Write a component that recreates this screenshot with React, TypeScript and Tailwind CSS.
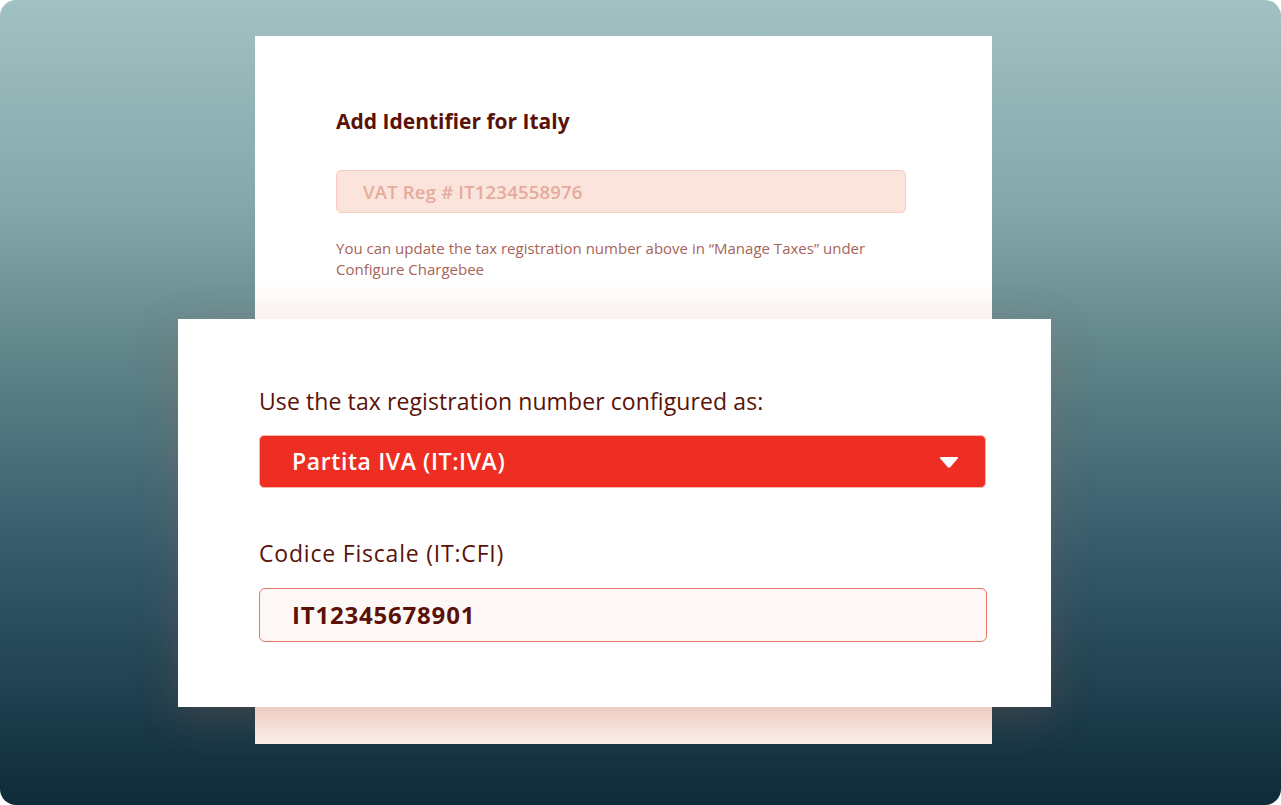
const FONT = "font-['Open_Sans','Noto_Sans',sans-serif]";

function CaretDown() {
  return (
    <svg width="22" height="14" viewBox="0 0 22 14" className="shrink-0">
      <path d="M3 2 H19 Q21 2 19.8 3.6 L12.4 12 Q11 13.4 9.6 12 L2.2 3.6 Q1 2 3 2 Z" fill="#ffffff" />
    </svg>
  );
}

function BackCard() {
  return (
    <div className="w-[737px] h-[708px] bg-[linear-gradient(180deg,#ffffff_0%,#ffffff_34%,#fefaf8_38%,#ffffff_42%,#ffffff_94%,#f7e0d8_94.8%,#fcf1ed_100%)] pl-[81px] pt-[71px]">
      <h2 className="text-[21px] leading-[28px] font-bold text-[#5a1208]">
        Add Identifier for Italy
      </h2>
      <div className="mt-[35px] w-[570px] h-[43px] rounded-[5px] border border-[#f5cdbf] bg-[#fbe4dc] flex items-center pl-[26px]">
        <span className="text-[18.5px] font-semibold text-[#e5ab9b] tracking-[0.2px]">VAT Reg # IT1234558976</span>
      </div>
      <p className="mt-[25px] w-[560px] text-[15px] leading-[21px] text-[#a8645a]">
        You can update the tax registration number above in “Manage Taxes” under Configure Chargebee
      </p>
    </div>
  );
}

function FrontCard() {
  return (
    <div className="absolute left-[-77px] top-[283px] w-[873px] h-[388px] bg-white pl-[81px] pt-[67px] shadow-[0_10px_40px_rgba(190,90,70,0.22)]">
      <div className="text-[23px] leading-[30px] text-[#5a1208] tracking-[0.1px]">
        Use the tax registration number configured as:
      </div>
      <div className="mt-[19px] w-[727px] h-[53px] rounded-[5px] bg-[#ee2e22] border border-[#f7b7a8] flex items-center justify-between pl-[32px] pr-[25px]">
        <span className="text-[23px] font-semibold text-white tracking-[0.6px]">Partita IVA (IT:IVA)</span>
        <CaretDown />
      </div>
      <div className="mt-[50px] text-[23px] leading-[30px] text-[#5a1208] tracking-[0.8px]">
        Codice Fiscale (IT:CFI)
      </div>
      <div className="mt-[20px] w-[728px] h-[54px] rounded-[6px] border-[1.5px] border-[#e8776a] bg-[#fdf8f6] flex items-center pl-[32px]">
        <span className="text-[24px] font-bold text-[#5a1208] tracking-[0.8px]">IT12345678901</span>
      </div>
    </div>
  );
}

export default function App() {
  return (
    <div className={`w-[1281px] h-[805px] bg-white ${FONT}`}>
      <div className="w-full h-full rounded-[16px] overflow-hidden bg-[linear-gradient(180deg,#a1c1c2_0%,#86a8ab_25%,#5d8388_45%,#33596a_70%,#0e2b39_100%)] pl-[255px] pt-[36px]">
        <div className="relative w-[737px]">
          <BackCard />
          <FrontCard />
        </div>
      </div>
    </div>
  );
}
